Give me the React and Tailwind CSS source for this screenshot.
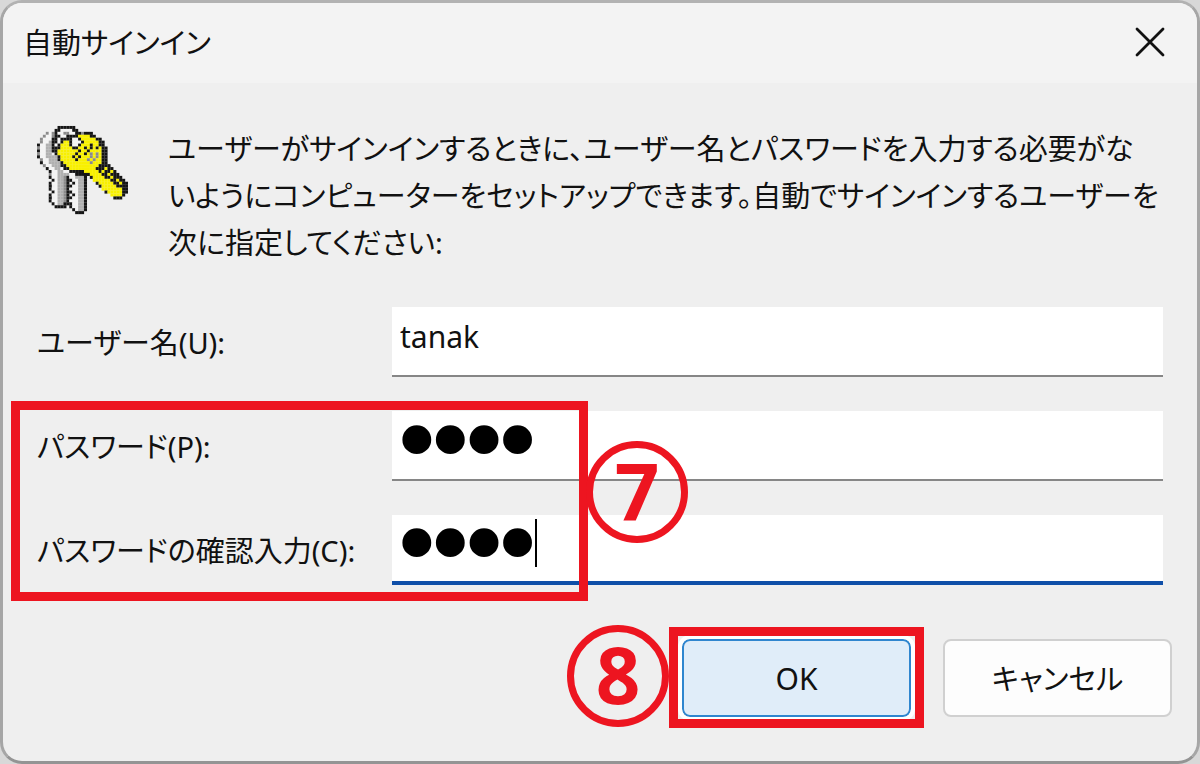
const KEY_ROWS = [
  '.......kkkkkk..................',
  '......kkwwwwkk.................',
  '...gwgkwwggwwkkgkkk............',
  '..gwwgkkwwkkkkyyyykk...........',
  '.gwwwkkwkkkkwwkyyyyykk.........',
  '.gwwskkwkyykwwwkyyyyykk........',
  'kwwsskwkyyykwwkyyykyykk........',
  'gwwsskkkyyyykkyykykykykk.......',
  'kwwsskkyyyyyyykyykyyyykk.......',
  'gwwss.kyyyyyykyykygygykk.......',
  'kwwsssskyyyykykyyygygykk.......',
  '.gwwssskyyyyykyyygygyykk.......',
  '.kwwsssskyyyyyyyyygyyykk.......',
  '..gwwssskkyyyyyyyyyyykkkk......',
  '...kwwsswkkyyyyyyyyykkkykk.....',
  '....kwwsswwkkkkkyyyyykykkyk....',
  '....gwwsssswwkkkkkyyyykkykkk...',
  '....kwwssgkwwsssk.kyyyykkykkk..',
  '.....kwssgkkwwssk..yyyyyykkykk.',
  '....kwwssgk.kwssk...kyyyyykkykk',
  '....k.wssgkkwwssk....kyyyyykkkk',
  '....kwwssgkwwwssk.....yyyyyyykk',
  '.....kwssgkkwwssk......kyyyyykk',
  '....kwwssgk.kwssk........yyyyk.',
  '....k.wssgkkwwssk.........kkk..',
  '....kwwssgkwwwssk..............',
  '.....kwsskkkwwssk..............',
  '......kkkk.kwwssk..............',
  '............kwssk..............',
  '.............kkk...............',
];

const KEY_COLORS = { k: '#151515', y: '#f8f000', s: '#b0b0b0', w: '#f4f4f4', g: '#8b8b8b' };

function KeysIcon() {
  return (
    <svg viewBox="0 0 31 30" className="h-[90px] w-[91px] shrink-0" aria-hidden="true">
      {KEY_ROWS.flatMap((row, y) =>
        [...row].map((c, x) =>
          KEY_COLORS[c] ? (
            <rect key={`${x}-${y}`} x={x} y={y} width="1.04" height="1.04" fill={KEY_COLORS[c]} />
          ) : null,
        ),
      )}
    </svg>
  );
}

function Field({ id, label, type, value, focused }) {
  return (
    <div className="flex items-center">
      <label htmlFor={id} className="w-[355px] shrink-0 whitespace-nowrap">
        {label}
      </label>
      <div className="relative min-w-0 flex-1">
        <input
          id={id}
          type={type}
          defaultValue={value}
          className={
            'block h-[70px] w-full bg-white px-2 outline-none ' +
            (type === 'password'
              ? "pb-3.5 font-['Liberation_Serif',serif] text-[96px] leading-[52px] text-black [-webkit-text-stroke:6px_black] "
              : 'pb-2.5 text-[30px] ') +
            (focused ? 'border-b-4 border-[#0f4fa8]' : 'border-b-2 border-[#868686]')
          }
        />
        {focused && <span className="absolute left-[143px] top-1 h-12 w-0.5 bg-black" />}
      </div>
    </div>
  );
}

function StepBadge({ children, className }) {
  return (
    <span
      className={
        "absolute flex size-[102px] items-center justify-center rounded-full border-[7px] border-[#ed1520] pb-1 font-['Open_Sans',sans-serif] text-[78px] font-bold leading-none text-[#ed1520] " +
        className
      }
    >
      {children}
    </span>
  );
}

export default function App() {
  return (
    <main className="min-h-screen bg-[#d8d8d8] text-[29px] leading-[47px] text-[#111] font-['Noto_Sans','Noto_Sans_CJK_JP',sans-serif] [font-feature-settings:'palt']">
      <section
        role="dialog"
        aria-labelledby="dialog-title"
        className="flex min-h-screen flex-col rounded-[22px] border-[3px] border-[#a6a6a6] border-b-[#949494] border-t-[#b2b2b2] bg-[#efefef]"
      >
        <header className="flex h-20 items-center justify-between rounded-t-[19px] bg-[#f3f3f3] pb-0.5 pl-5 pr-8">
          <h1 id="dialog-title">自動サインイン</h1>
          <button type="button" aria-label="閉じる">
            <svg viewBox="0 0 30 30" className="size-[30px]" fill="none" stroke="#111" strokeWidth="2.8" strokeLinecap="round">
              <path d="M2 2 28 28M28 2 2 28" />
            </svg>
          </button>
        </header>

        <form className="flex flex-col pl-[34px] pr-[34px] pt-[42px]">
          <div className="flex gap-10">
            <KeysIcon />
            <p className="whitespace-nowrap">
              ユーザーがサインインするときに、ユーザー名とパスワードを入力する必要がな
              <br />
              いようにコンピューターをセットアップできます。自動でサインインするユーザーを
              <br />
              次に指定してください:
            </p>
          </div>

          <div className="mt-[41px] flex flex-col gap-[34px]">
            <Field id="user" label="ユーザー名(U):" type="text" value="tanak" />
            <div className="relative flex flex-col gap-[34px]">
              <Field id="password" label="パスワード(P):" type="password" value="0000" />
              <Field id="confirm" label="パスワードの確認入力(C):" type="password" value="0000" focused />
              <div className="pointer-events-none absolute -bottom-4 -left-[26px] -top-[10px] w-[577px] border-[9px] border-[#ed1520]" />
              <StepBadge className="left-[549px] top-[30px]">7</StepBadge>
            </div>
          </div>

          <div className="-mr-[9px] mt-[54px] flex justify-end gap-8">
            <div className="relative">
              <button type="button" className="h-[78px] w-[229px] rounded-lg border-2 border-[#2f86cf] bg-[#e0edf9] text-[30px] outline-4 outline-white">
                OK
              </button>
              <div className="pointer-events-none absolute -inset-x-[13px] -bottom-[11px] -top-3 border-[9px] border-[#ed1520]" />
              <StepBadge className="-left-[115px] -top-[14px]">8</StepBadge>
            </div>
            <button type="button" className="h-[78px] w-[229px] rounded-lg border-2 border-[#d0d0d0] bg-[#fdfdfd]">
              キャンセル
            </button>
          </div>
        </form>
      </section>
    </main>
  );
}
